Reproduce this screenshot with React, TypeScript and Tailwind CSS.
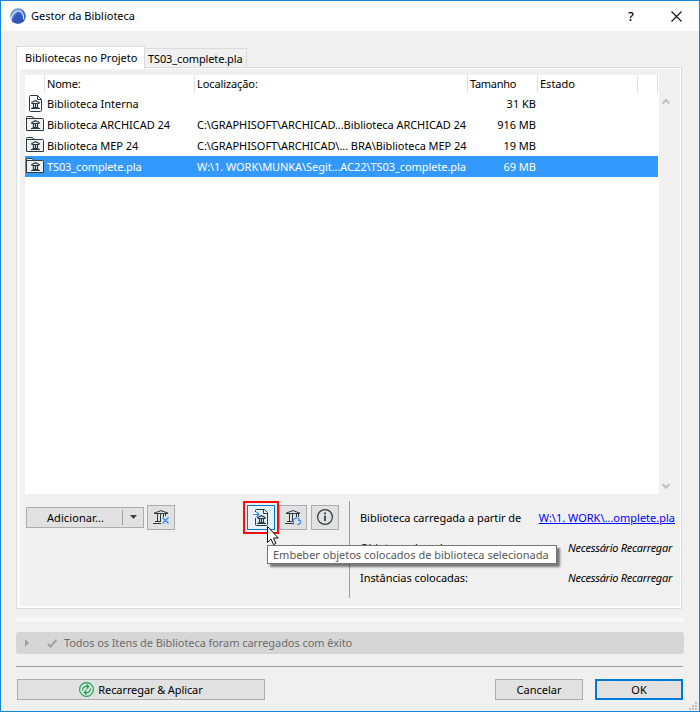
import React from "react";

const INK = "#2b3a42";

function AppLogo() {
  return (
    <svg className="h-4 w-4" viewBox="0 0 16 16">
      <defs>
        <linearGradient id="logo" x1="0" y1="0" x2="1" y2="1">
          <stop offset="0" stopColor="#8db4ea" />
          <stop offset="0.5" stopColor="#4d78d2" />
          <stop offset="1" stopColor="#1b3fa6" />
        </linearGradient>
      </defs>
      <circle cx="8" cy="8" r="7.8" fill="url(#logo)" />
      <path d="M0.600 11.500C2.600 6 5.800 2.600 8.800 2.800c3 .3 5 4 5 8.400" fill="none" stroke="#e8f0fc" strokeWidth="1.100" />
      <path d="M2 14C3.500 8.500 6 4.600 8.700 4.600c2.600 0 4.200 4 4.300 9L8 15.800z" fill="#3157bd" />
    </svg>
  );
}

function SmallTemple({ x, y }: { x: number; y: number }) {
  return (
    <g transform={`translate(${x} ${y})`} stroke={INK} fill="none">
      <path d="M0.300 2.800L4.500 0.600L8.700 2.800" strokeWidth="1.200" />
      <path d="M0.500 3.500H8.500M0 8.500H9M1.500 7.500H7.500" />
      <path d="M2.500 4V7M4.500 4V7M6.500 4V7" strokeWidth="1.200" />
    </g>
  );
}

function FolderIcon() {
  return (
    <svg className="h-[15px] w-[18px]" viewBox="0 0 18 15">
      <path d="M0.500 14.500V1.500Q.5.5 1.500.5H6L8.500 2.500H16.500Q17.500 2.500 17.500 3.500V14.500Z" fill="#f0f0f0" stroke={INK} />
      <path d="M1 2.500H9" stroke={INK} />
      <SmallTemple x={5} y={4} />
    </svg>
  );
}

function DocumentIcon() {
  return (
    <svg className="ml-[3px] h-[17px] w-[13px]" viewBox="0 0 13 17">
      <path d="M1.500.5H8.500L12.500 4.500V15.500Q12.500 16.500 11.500 16.500H1.500Q.5 16.500.5 15.500V1.500Q.5.5 1.500.5Z" fill="#fff" stroke={INK} />
      <path d="M8.500.5V4.500H12.500" fill="none" stroke={INK} />
      <SmallTemple x={2} y={5} />
    </svg>
  );
}

function Temple({ kind }: { kind: "remove" | "reload" }) {
  return (
    <svg className="h-[15px] w-4" viewBox="0 0 16 15" fill="none" stroke={INK}>
      <path d="M1 3.200L8 .6L15 3.200M1 3.500H15M0 13.500H8M2 11.500H8M4.500 4V11M7.500 4V11" />
      {kind === "remove" ? (
        <>
          <path d="M10.500 4V7M12.500 4V6" />
          <path d="M9.500 7.500L15.500 13.500M15.500 7.500L9.500 13.500" stroke="#3787f5" strokeWidth="1.300" />
        </>
      ) : (
        <>
          <path d="M11.500 4V7M13.500 4V7" />
          <path d="M8.500 14.500V11.500H7M8.500 12C8 9.500 9.500 8 11.500 8c1.800 0 3 1.200 3.200 3M15.500 11.500c0 1.800-1.500 3-3.500 3" stroke="#3787f5" strokeWidth="1.200" />
          <path d="M13 10.500H15.500V13" stroke="#3787f5" />
        </>
      )}
    </svg>
  );
}

function EmbedIcon() {
  return (
    <svg className="h-[17px] w-[16px]" viewBox="0 0 16 17" fill="none" stroke={INK}>
      <path d="M2.500 3V1.500Q2.500.5 3.500.5H11.500L14.500 3.500V15.500Q14.500 16.500 13.500 16.500H3.500Q2.500 16.500 2.500 15.500V9" />
      <path d="M10.500 .5V4.500H14.500" />
      <path d="M0 5.500H6M3.500 3L6 5.500L3.500 8" stroke="#3787f5" strokeWidth="1.200" />
      <SmallTemple x={4} y={6} />
    </svg>
  );
}

function InfoIcon() {
  return (
    <svg className="h-[17px] w-[16px]" viewBox="0 0 16 17" fill="none" stroke={INK}>
      <circle cx="8" cy="8" r="7.400" strokeWidth="1.200" />
      <path d="M8 6.500V12" strokeWidth="1.700" />
      <path d="M8 3.500V5.200" strokeWidth="1.900" />
    </svg>
  );
}

function ReloadIcon() {
  return (
    <svg className="h-[15px] w-[15px]" viewBox="0 0 15 15" fill="none" stroke="#12a54a">
      <circle cx="7.500" cy="7.500" r="6.900" strokeWidth="1.100" />
      <path d="M3.500 8.500C3.500 5 6 4 9 4.500M7.500 2.500L9.700 4.600L7.500 6.700M11.500 6.500C11.500 10 9 11 6 10.500M7.500 8.300L5.300 10.400L7.500 12.500" strokeWidth="1.200" />
    </svg>
  );
}

function Chevron({ down = false }: { down?: boolean }) {
  return (
    <svg className="h-[7px] w-[8px]" viewBox="0 0 8 7" fill="none" stroke="#bfbfbf" strokeWidth="2">
      <path d={down ? "M.7 1.200L4 4.800L7.300 1.200" : "M.7 5.500L4 1.900L7.300 5.500"} />
    </svg>
  );
}

const rows = [
  { name: "Biblioteca Interna", path: "", size: "31 KB", doc: true },
  { name: "Biblioteca ARCHICAD 24", path: "C:\\GRAPHISOFT\\ARCHICAD...Biblioteca ARCHICAD 24", size: "916 MB" },
  { name: "Biblioteca MEP 24", path: "C:\\GRAPHISOFT\\ARCHICAD\\... BRA\\Biblioteca MEP 24", size: "19 MB" },
  { name: "TS03_complete.pla", path: "W:\\1. WORK\\MUNKA\\Segit...AC22\\TS03_complete.pla", size: "69 MB", selected: true },
];

function LibraryTable() {
  return (
    <div className="flex h-[419px] w-[649px]">
      <div className="w-[634px] bg-white">
        <div className="flex h-[18px] leading-[18px]">
          <div className="w-5 border-r border-[#e0e0e0]" />
          <div className="w-[150px] border-r border-[#e0e0e0] pl-[2px] tracking-[-0.2px]">Nome:</div>
          <div className="w-[273px] border-r border-[#e0e0e0] pl-[2px] tracking-[-0.1px]">Localização:</div>
          <div className="w-[70px] border-r border-[#e0e0e0] pl-[2px] tracking-[-0.3px]">Tamanho</div>
          <div className="w-[100px] border-r border-[#e0e0e0] pl-[2px]">Estado</div>
          <div className="w-5 border-r border-[#e0e0e0]" />
        </div>
        {rows.map((r) => (
          <div key={r.name} className={`flex h-[21px] w-[633px] items-center ${r.selected ? "bg-[#3399ff] text-white" : ""}`}>
            <div className="flex h-full w-[22px] items-start pt-[2px] pl-px">{r.doc ? <DocumentIcon /> : <FolderIcon />}</div>
            <div className={`w-[150px] ${r.selected ? "tracking-[-0.12px]" : r.doc ? "" : "tracking-[-0.03px]"}`}>{r.name}</div>
            <div className="w-[271px] tracking-[-0.06px]">{r.path}</div>
            <div className="w-[93px] pr-[25px] text-right">{r.size}</div>
          </div>
        ))}
      </div>
      <div className="flex flex-1 flex-col items-center justify-between pt-[23px] pr-[2px] pb-1">
        <Chevron />
        <Chevron down />
      </div>
    </div>
  );
}

function IconButton({ children, active = false }: { children: React.ReactNode; active?: boolean }) {
  return (
    <button className={`flex h-[25px] w-7 items-center justify-center border ${active ? "border-[#0078d7] bg-[#e5f1fb]" : "border-[#adadad] bg-[#e1e1e1]"}`}>
      {children}
    </button>
  );
}

export default function App() {
  return (
    <div className="relative flex h-[712px] w-[700px] flex-col overflow-hidden border border-[#1883d7] bg-[#f0f0f0] font-['Noto_Sans','Open_Sans',sans-serif] text-[11px] leading-4 whitespace-pre text-black">
      <header className="flex h-[30px] shrink-0 items-center bg-white pl-[9px]">
        <AppLogo />
        <span className="ml-[5px] flex-1">Gestor da Biblioteca</span>
        <span className="w-[43px] text-[13px] font-medium">?</span>
        <svg className="mr-[17px] h-[11px] w-[11px]" viewBox="0 0 11 11" stroke="#111" strokeWidth="1.100">
          <path d="M.5.5L10.500 10.500M10.500.5L.5 10.500" />
        </svg>
      </header>

      <nav className="mt-[15px] ml-[15px] flex h-[21px] items-end">
        <div className="z-10 -mb-[2px] h-[23px] w-[129px] border border-b-0 border-[#dcdcdc] bg-white pl-2 leading-[21px]">Bibliotecas no Projeto</div>
        <div className="h-[19px] w-[102px] border border-b-0 border-l-0 border-[#dcdcdc] pl-[3px] leading-[19px] tracking-[-0.12px]">TS03_complete.pla</div>
      </nav>

      <section className="ml-[15px] flex h-[542px] w-[666px] shrink-0 flex-col border border-[#dcdcdc] bg-white pt-px pr-px pb-[2px] pl-[3px]">
        <div className="flex-1 bg-[#f0f0f0] pt-[6px] pl-[5px]">
          <LibraryTable />
          <div className="flex h-[104px] pt-[7px]">
            <div className="flex h-[33px] w-[324px] items-center pl-px">
              <button className="flex h-[21px] w-[118px] items-center border border-[#adadad] bg-[#e1e1e1]">
                <span className="w-[95px] pl-[2px] text-center tracking-[0.1px]">Adicionar...</span>
                <span className="flex h-[15px] flex-1 items-center justify-center border-l border-[#a0a0a0] pb-px">
                  <svg className="h-1 w-[7px]" viewBox="0 0 7 4"><path d="M0 0H7L3.500 4Z" fill="#404040" /></svg>
                </span>
              </button>
              <div className="ml-[3px]"><IconButton><Temple kind="remove" /></IconButton></div>
              <div className="ml-[68px] border-2 border-[#ff0a0a] p-[2px]"><IconButton active><EmbedIcon /></IconButton></div>
              <div><IconButton><Temple kind="reload" /></IconButton></div>
              <div className="ml-1"><IconButton><InfoIcon /></IconButton></div>
            </div>
            <dl className="grid h-[97px] w-[326px] grid-cols-[auto_auto] content-start justify-between gap-y-[14px] border-l border-[#a0a0a0] pt-[9px] pl-[10px]">
              <dt className="tracking-[-0.04px]">Biblioteca carregada a partir de</dt>
              <dd className="text-right text-[#0000ff] underline">W:\1. WORK\...omplete.pla</dd>
              <dt>Objetos colocados:</dt>
              <dd className="pr-[3px] text-right tracking-[-0.28px] italic">Necessário Recarregar</dd>
              <dt className="tracking-[-0.06px]">Instâncias colocadas:</dt>
              <dd className="pr-[3px] text-right tracking-[-0.28px] italic">Necessário Recarregar</dd>
            </dl>
          </div>
        </div>
      </section>

      <div className="mt-2 ml-[15px] h-[5px] w-[668px] shrink-0 bg-[#f7f7f7]" />
      <div className="mt-[10px] ml-[15px] flex h-[22px] w-[668px] shrink-0 items-center rounded-[3px] bg-[#d6d6d6] pl-[9px] text-[#6d6d6d]">
        <svg className="h-2 w-1" viewBox="0 0 4 8"><path d="M0 0L4 4L0 8Z" fill="#a0a0a0" /></svg>
        <svg className="mr-[7px] ml-[18px] h-[9px] w-[10px]" viewBox="0 0 10 9"><path d="M.8 5L3.500 7.500L9.300 1" fill="none" stroke="#a0a0a0" strokeWidth="2" /></svg>
        <span className="tracking-[-0.07px]">Todos os Itens de Biblioteca foram carregados com êxito</span>
      </div>
      <div className="mt-3 ml-[15px] h-px w-[667px] shrink-0 bg-[#a0a0a0]" />
      <footer className="mt-3 ml-4 flex h-[21px] w-[666px] shrink-0">
        <button className="flex w-[248px] items-center justify-center gap-[4px] border border-[#adadad] bg-[#e1e1e1]">
          <ReloadIcon />
          <span className="tracking-[-0.1px]">Recarregar &amp; Aplicar</span>
        </button>
        <button className="ml-[230px] w-[88px] border border-[#adadad] bg-[#e1e1e1]">Cancelar</button>
        <button className="ml-3 w-[88px] border-2 border-[#0078d7] bg-[#e1e1e1]">OK</button>
      </footer>

      <div className="absolute top-[544px] left-[266px] h-[19px] w-[290px] border border-[#767676] bg-white pl-[5px] leading-[17px] text-[#575757] shadow-[3px_3px_2px_rgba(0,0,0,0.5)]">
        Embeber objetos colocados de biblioteca selecionada
      </div>
      <svg className="absolute top-[525px] left-[266px] h-[19px] w-[12px]" viewBox="0 0 12 19">
        <path d="M.5.500V16.500L4 13L6.500 18.500L9 17.500L6.500 12H11.300Z" fill="#fff" stroke="#111" />
      </svg>
      <svg className="absolute right-[2px] bottom-[1px] h-2 w-2" viewBox="0 0 8 8" fill="#bfbfbf">
        <path d="M6 0h2v2H6zM3 3h2v2H3zM6 3h2v2H6zM0 6h2v2H0zM3 6h2v2H3zM6 6h2v2H6z" />
      </svg>
    </div>
  );
}
